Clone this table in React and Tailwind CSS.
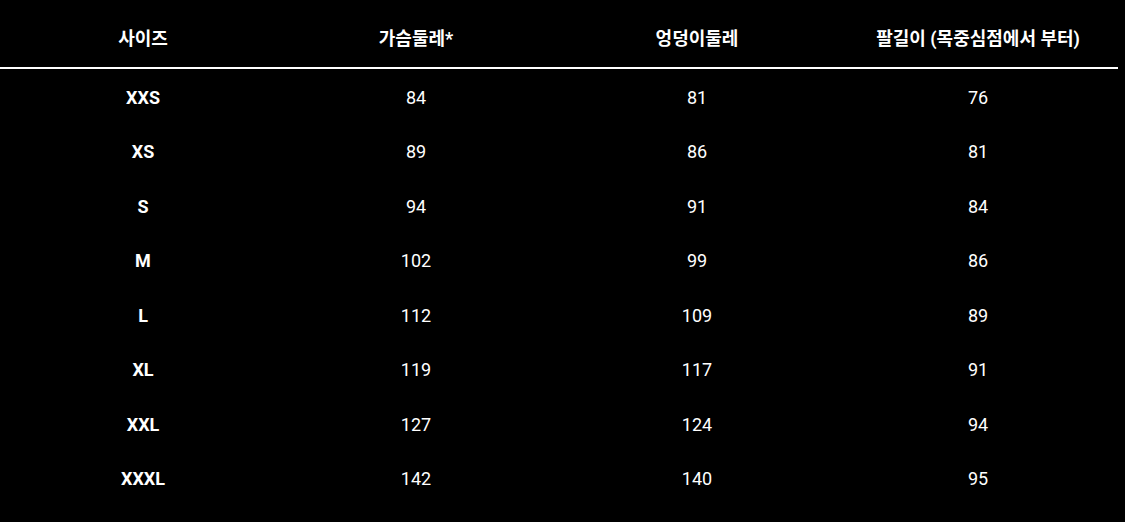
import React from 'react';

const headers = ['사이즈', '가슴둘레*', '엉덩이둘레', '팔길이 (목중심점에서 부터)'];

const rows = [
  ['XXS', 84, 81, 76],
  ['XS', 89, 86, 81],
  ['S', 94, 91, 84],
  ['M', 102, 99, 86],
  ['L', 112, 109, 89],
  ['XL', 119, 117, 91],
  ['XXL', 127, 124, 94],
  ['XXXL', 142, 140, 95],
];

export default function App() {
  return (
    <div
      className="w-[1125px] h-[522px] bg-black text-white overflow-hidden"
      style={{ fontFamily: 'Roboto, "Noto Sans CJK KR", sans-serif' }}
    >
      <div className="w-[1118px]">
        <div className="grid grid-cols-[286px_260px_302px_260px] h-[69px] border-b-2 border-white text-[18px] font-bold pt-[10px]">
          {headers.map((h) => (
            <div key={h} className="flex items-center justify-center">
              {h}
            </div>
          ))}
        </div>
        <div className="pt-[1px]">
          {rows.map((r) => (
            <div key={r[0]} className="grid grid-cols-[286px_260px_302px_260px] h-[54.5px] text-[18px]">
              <div className="flex items-center justify-center font-bold">{r[0]}</div>
              <div className="flex items-center justify-center">{r[1]}</div>
              <div className="flex items-center justify-center">{r[2]}</div>
              <div className="flex items-center justify-center">{r[3]}</div>
            </div>
          ))}
        </div>
      </div>
    </div>
  );
}
